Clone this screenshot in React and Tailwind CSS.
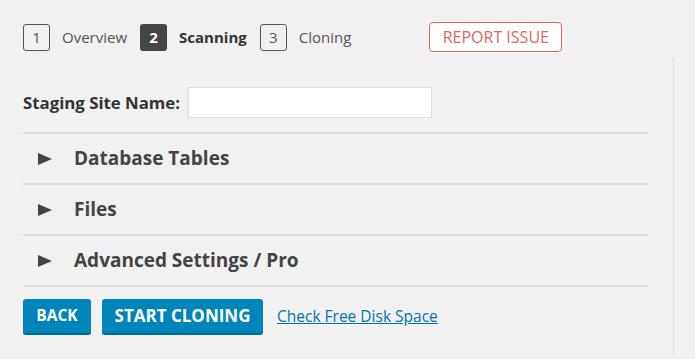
const steps = [
  { n: 1, label: 'Overview' },
  { n: 2, label: 'Scanning', active: true },
  { n: 3, label: 'Cloning' },
]

const sections = ['Database Tables', 'Files', 'Advanced Settings / Pro']

const Arrow = () => (
  <svg width="14" height="12" viewBox="0 0 14 12" className="shrink-0">
    <path d="M0 0 L14 6 L0 12 Z" fill="#444" />
  </svg>
)

const Divider = () => <div className="h-[2px] w-[625px] bg-[#dcdcdc]" />

export default function App() {
  return (
    <div
      className="h-[359px] w-[695px] overflow-hidden bg-[#f1f1f1] pt-[22px] text-[#444]"
      style={{ fontFamily: '"Open Sans", "Noto Sans", sans-serif' }}
    >
      <div className="flex h-[30px] items-center pl-[23px]">
        {steps.map((s) => (
          <div key={s.n} className="mr-[13px] flex items-center">
            <span
              className={`flex h-[27px] w-[27px] items-center justify-center rounded-[3px] text-[15px] ${
                s.active ? 'bg-[#454545] font-bold text-white' : 'border border-[#555] text-[#555]'
              }`}
            >
              {s.n}
            </span>
            <span className={`ml-[12px] text-[15px] ${s.active ? 'font-bold text-[#333]' : 'text-[#555]'}`}>
              {s.label}
            </span>
          </div>
        ))}
        <button className="ml-[65px] h-[30px] w-[133px] rounded-[4px] border border-[#e0675c] bg-white text-[16px] text-[#e0675c]">
          REPORT ISSUE
        </button>
      </div>

      <div className="mt-[6px] flex">
        <div className="w-[674px] border-r border-[#dcdcdc] pb-[20px] pl-[23px] pt-[29px]">
          <div className="flex items-center">
            <label className="text-[16.8px] font-bold text-[#333]">Staging Site Name:</label>
            <input
              type="text"
              className="ml-[8px] h-[31px] w-[244px] border border-[#ddd] bg-white outline-none"
            />
          </div>

          <div className="mt-[14px]">
            <Divider />
            {sections.map((t) => (
              <div key={t}>
                <div className="flex h-[49px] items-center pl-[15px]">
                  <Arrow />
                  <span className="ml-[22px] text-[19px] font-bold text-[#444]">{t}</span>
                </div>
                <Divider />
              </div>
            ))}
          </div>

          <div className="mt-[12px] flex items-center">
            <button className="h-[36px] w-[68px] rounded-[3px] border-b-2 border-[#006799] bg-[#0085ba] text-[15.5px] font-bold text-white">
              BACK
            </button>
            <button className="ml-[11px] h-[36px] w-[161px] rounded-[3px] border-b-2 border-[#006799] bg-[#0085ba] text-[17px] font-bold text-white">
              START CLONING
            </button>
            <a href="#" className="ml-[14px] text-[15.5px] text-[#0073aa] underline">
              Check Free Disk Space
            </a>
          </div>
        </div>
      </div>
    </div>
  )
}
